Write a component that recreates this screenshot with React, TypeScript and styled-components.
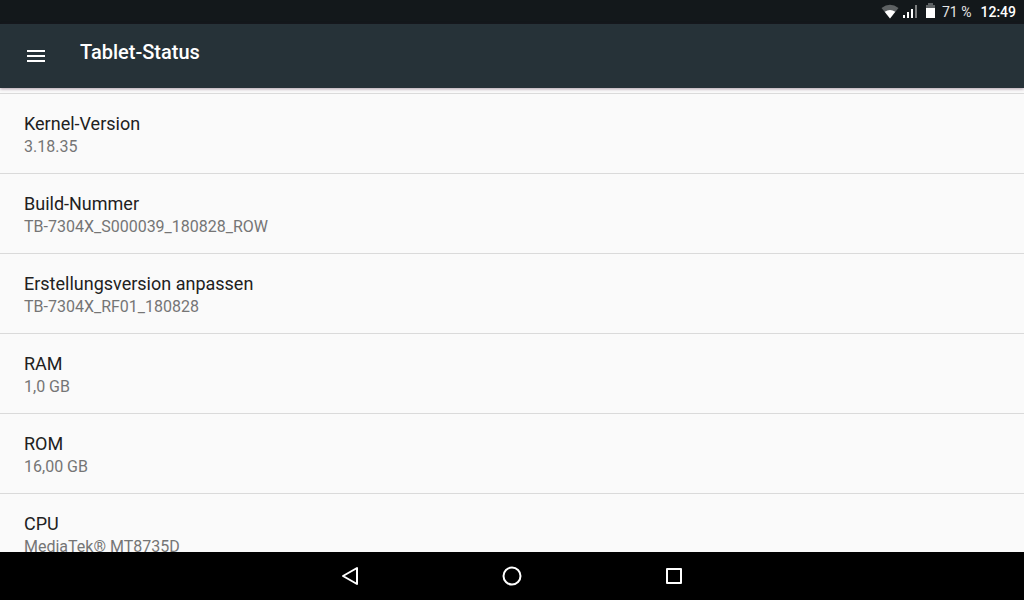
import React from "react";
import styled, { createGlobalStyle } from "styled-components";

const GlobalStyle = createGlobalStyle`
  * { box-sizing: border-box; }
  body { margin: 0; background: #fafafa; font-family: Roboto, "Liberation Sans", sans-serif; }
`;

const Screen = styled.div`
  display: flex;
  flex-direction: column;
  height: 100vh;
  overflow: hidden;
`;

const StatusBar = styled.div`
  display: flex;
  flex: none;
  align-items: center;
  justify-content: flex-end;
  height: 24px;
  padding-right: 8px;
  background: #13181b;
  color: #fff;
  font-size: 14px;
  line-height: 24px;
  white-space: pre;
`;

const Battery = styled.span`
  margin-left: 6px;
  color: #e4e5e5;
`;

const Clock = styled.time`
  margin-left: 9px;
  font-weight: 500;
`;

const AppBar = styled.header`
  display: flex;
  flex: none;
  height: 64px;
  padding-left: 24px;
  background: #263238;
  color: #fff;
  z-index: 1;
  box-shadow: 0 1px 3px rgba(60, 20, 50, 0.4);
`;

const MenuButton = styled.button`
  display: flex;
  align-items: center;
  width: 24px;
  padding: 0;
  border: 0;
  background: none;
  color: inherit;
`;

const Title = styled.h1`
  margin: 16px 0 0 32px;
  font-size: 20px;
  font-weight: 500;
  line-height: 24px;
`;

const Content = styled.main`
  flex: 1;
  min-height: 0;
  padding-top: 5px;
  overflow: hidden;
`;

const List = styled.dl`
  margin: 0;
`;

const Row = styled.div`
  height: 80px;
  padding: 18px 24px 0;
  border-top: 1px solid #dadada;
`;

const Label = styled.dt`
  color: #212121;
  font-size: 18px;
  line-height: 24px;
`;

const Value = styled.dd`
  margin: 0;
  color: #757575;
  font-size: 16px;
  line-height: 22px;
`;

const NavBar = styled.nav`
  display: flex;
  flex: none;
  justify-content: center;
  gap: 114px;
  height: 48px;
  background: #000;
`;

const NavButton = styled.button`
  width: 48px;
  height: 48px;
  padding: 0;
  border: 0;
  background: none;
  color: #fff;

  svg { display: block; }
`;

const entries = [
  { label: "Kernel-Version", value: "3.18.35" },
  { label: "Build-Nummer", value: "TB-7304X_S000039_180828_ROW" },
  { label: "Erstellungsversion anpassen", value: "TB-7304X_RF01_180828" },
  { label: "RAM", value: "1,0 GB" },
  { label: "ROM", value: "16,00 GB" },
  { label: "CPU", value: "MediaTek® MT8735D" },
];

const StatusIcons = () => (
  <svg width="56" height="24" viewBox="0 0 56 24" fill="#fff" aria-hidden="true">
    <path d="M1.500 8Q10 1.500 18.500 8L10 18.500Z" fill="#5d6163" />
    <path d="M4.700 11.800Q10 8 15.300 11.800L10 18.500Z" />
    <path d="M23 15h2v3h-2zM27 12h2v6h-2zM31 9h2v9h-2z" />
    <path d="M35 5h2v13h-2z" fill="#7b7d7e" />
    <path d="M46 5h2V3h5v2h2v4h-9z" fill="#5d6163" />
    <path d="M46 8h9v10h-9z" />
  </svg>
);

export default function App() {
  return (
    <Screen>
      <GlobalStyle />
      <StatusBar>
        <StatusIcons />
        <Battery>71 %</Battery>
        <Clock>12:49</Clock>
      </StatusBar>
      <AppBar>
        <MenuButton aria-label="Menü">
          <svg width="24" height="24" viewBox="0 0 24 24" fill="currentColor">
            <path d="M3 6h18v2H3zM3 11h18v2H3zM3 16h18v2H3z" />
          </svg>
        </MenuButton>
        <Title>Tablet-Status</Title>
      </AppBar>
      <Content>
        <List>
          {entries.map((entry) => (
            <Row key={entry.label}>
              <Label>{entry.label}</Label>
              <Value>{entry.value}</Value>
            </Row>
          ))}
        </List>
      </Content>
      <NavBar>
        <NavButton aria-label="Zurück">
          <svg width="48" height="48" viewBox="0 0 48 48" fill="none" stroke="currentColor" strokeWidth="2" strokeLinejoin="round">
            <path d="M31 16v16L17 24z" />
          </svg>
        </NavButton>
        <NavButton aria-label="Startbildschirm">
          <svg width="48" height="48" viewBox="0 0 48 48" fill="none" stroke="currentColor" strokeWidth="2">
            <circle cx="24" cy="24" r="8.500" />
          </svg>
        </NavButton>
        <NavButton aria-label="Übersicht">
          <svg width="48" height="48" viewBox="0 0 48 48" fill="none" stroke="currentColor" strokeWidth="2" strokeLinejoin="round">
            <rect x="17" y="17" width="14" height="14" />
          </svg>
        </NavButton>
      </NavBar>
    </Screen>
  );
}
